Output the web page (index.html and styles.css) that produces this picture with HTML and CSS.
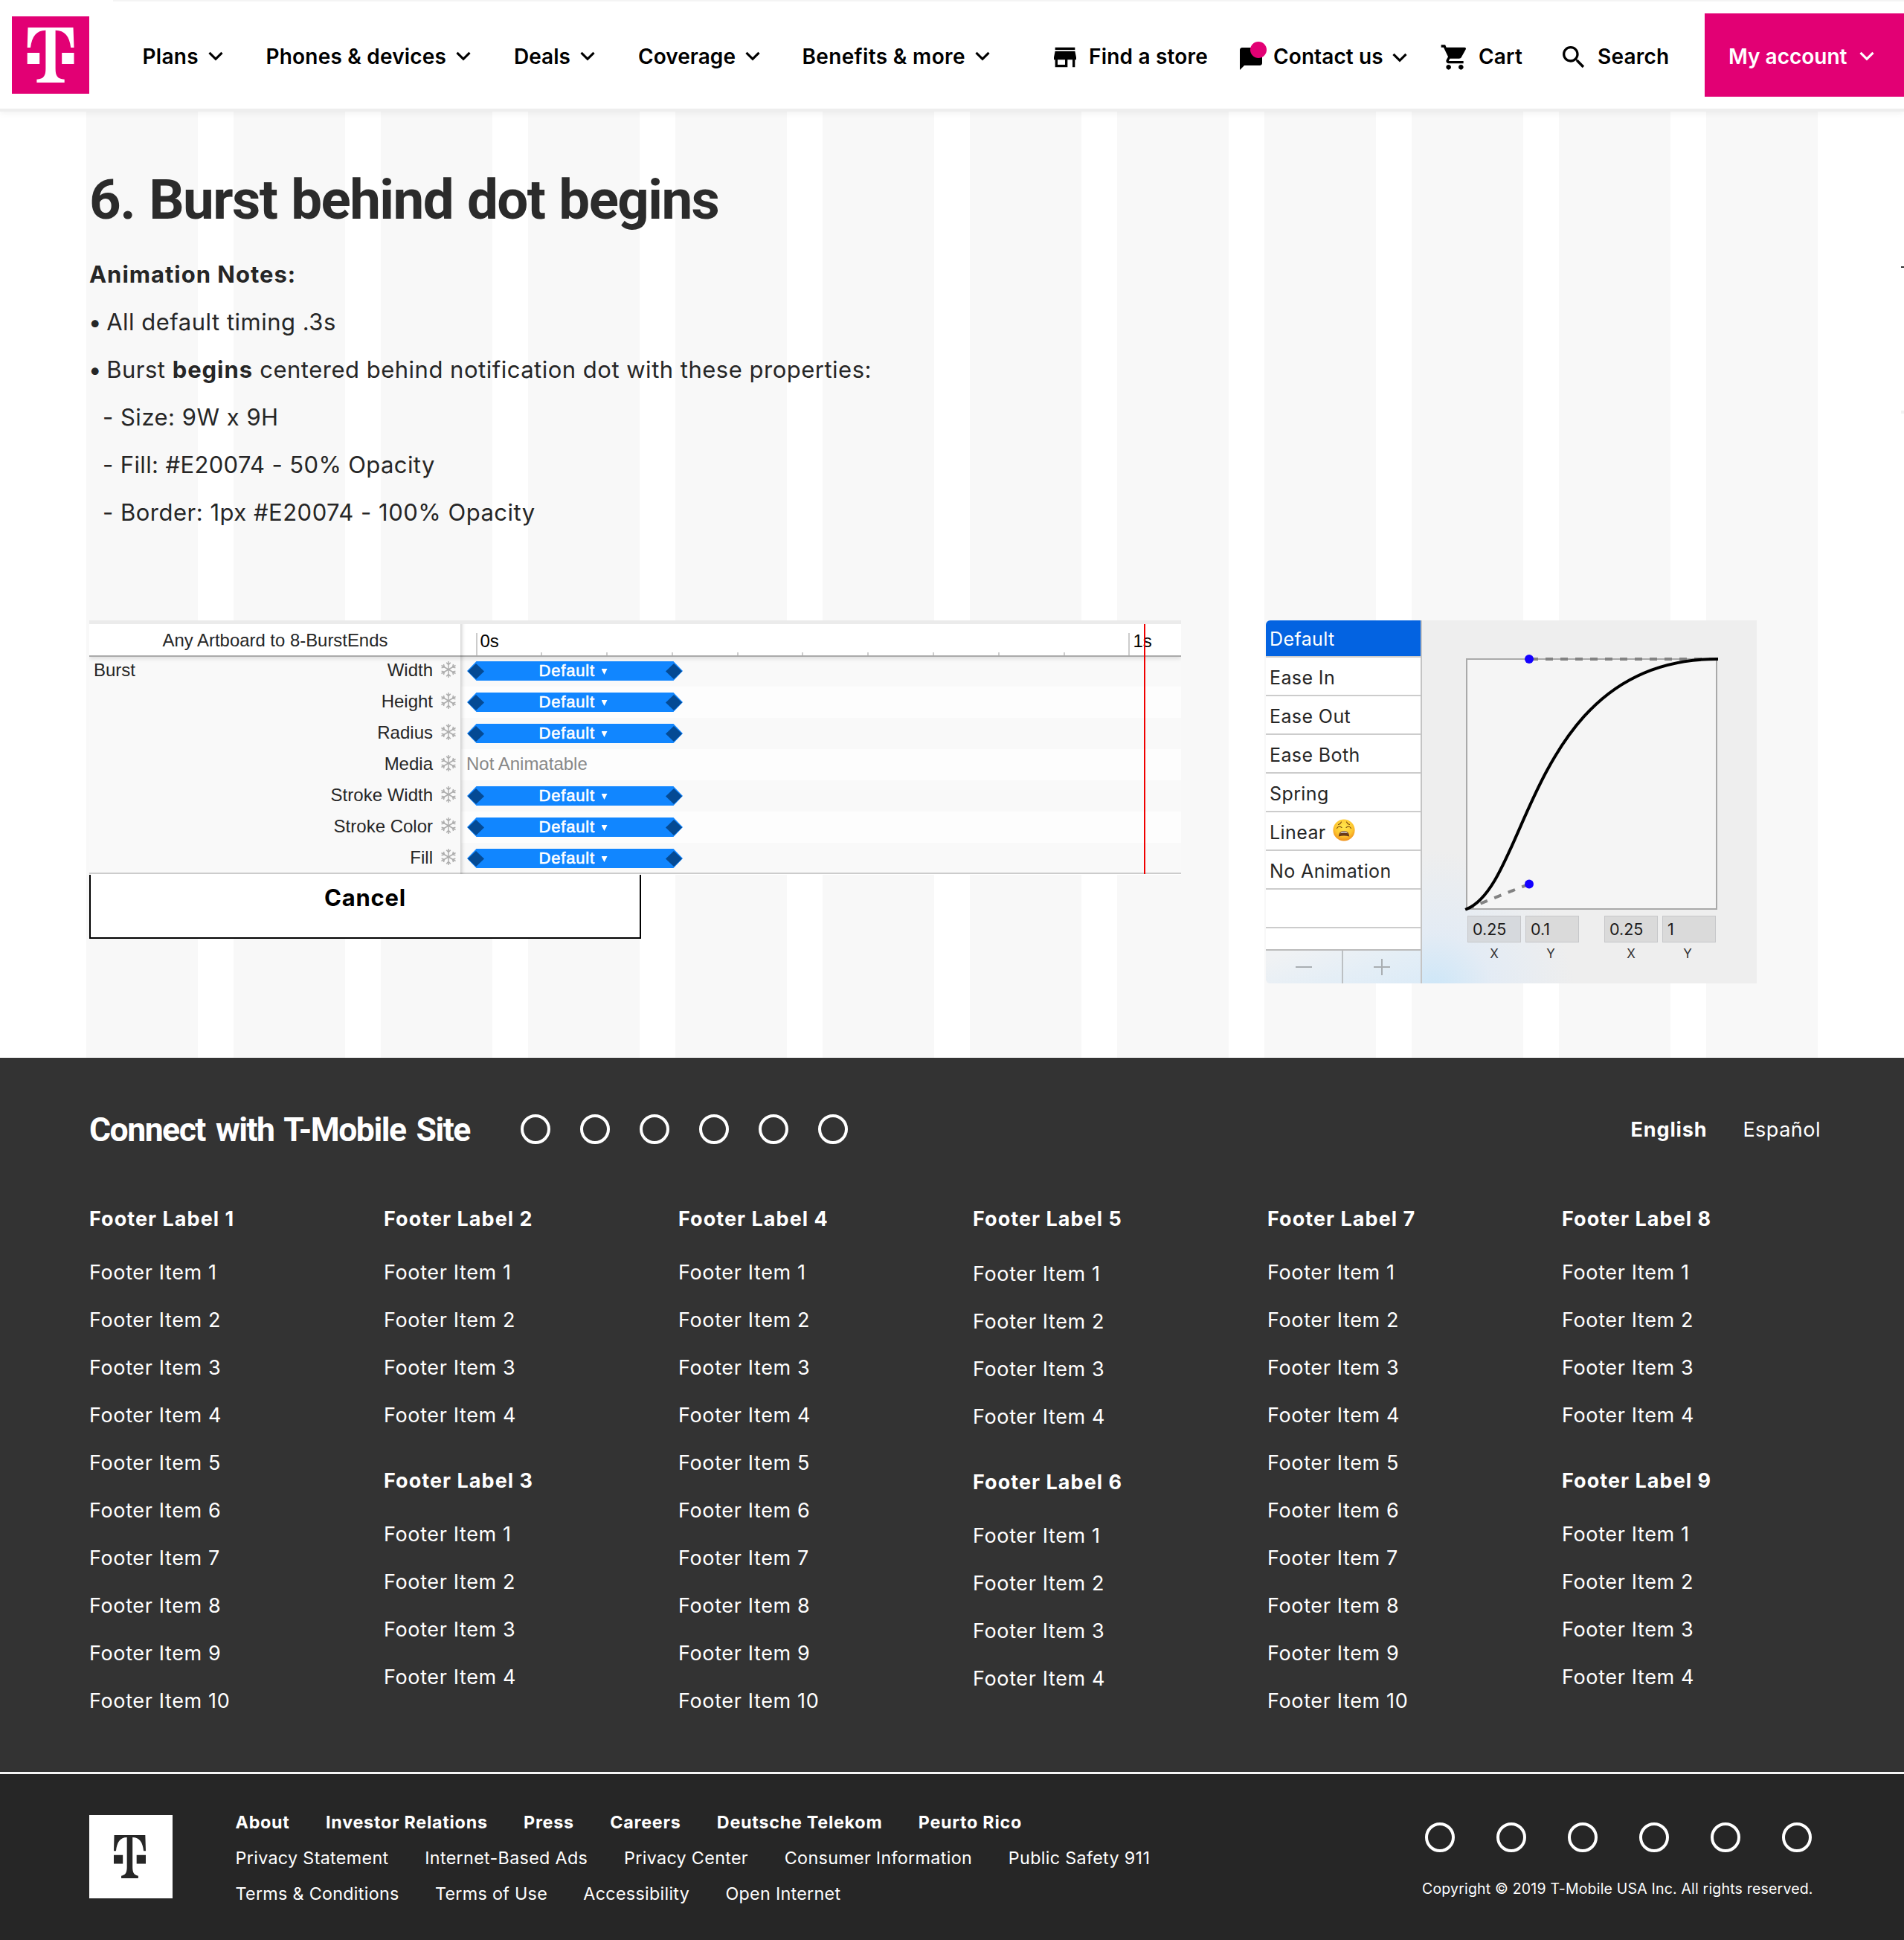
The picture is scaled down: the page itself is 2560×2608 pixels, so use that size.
FILE: index.html
```html
<!DOCTYPE html>
<html lang="en">
<head>
<meta charset="utf-8">
<title>Burst behind dot begins</title>
<link rel="stylesheet" href="styles.css">
</head>
<body>
<svg class="defs" width="0" height="0" aria-hidden="true">
  <symbol id="tee" viewBox="0 0 104 104"><path d="M21.5 15H82.5L83.5 42H79.2C77.5 27 71 18.7 58.6 18.7V70C58.6 80 61 84 70.7 84.7V89H33.4V84.7C43 84 45.4 80 45.4 70V18.7C33 18.7 27 27 25 42H20.7ZM20.7 49H37.2V64H20.7ZM67.2 49H83.5V64H67.2Z"/></symbol>
  <symbol id="chev" viewBox="0 0 20 13"><path d="M1.5 1.8L10 10.3L18.5 1.8" fill="none" stroke="currentColor" stroke-width="3.2"/></symbol>
  <symbol id="flake" viewBox="0 0 22 22"><g fill="none" stroke="#adadad" stroke-width="1.5">
    <g id="arm"><path d="M11 11V0M8.2 1.8L11 4.600L13.8 1.8"/></g>
    <use href="#arm" transform="rotate(60 11 11)"/><use href="#arm" transform="rotate(120 11 11)"/><use href="#arm" transform="rotate(180 11 11)"/><use href="#arm" transform="rotate(240 11 11)"/><use href="#arm" transform="rotate(300 11 11)"/></g></symbol>
  <symbol id="key" viewBox="0 0 22 21"><path d="M11 0L22 10.5L11 21L0 10.5Z" fill="#044a94"/></symbol>
</svg>

<header class="header">
  <svg class="logo"><use href="#tee"/></svg>
  <nav class="nav">
    <a>Plans <svg class="chev"><use href="#chev"/></svg></a>
    <a>Phones &amp; devices <svg class="chev"><use href="#chev"/></svg></a>
    <a>Deals <svg class="chev"><use href="#chev"/></svg></a>
    <a>Coverage <svg class="chev"><use href="#chev"/></svg></a>
    <a>Benefits &amp; more <svg class="chev"><use href="#chev"/></svg></a>
  </nav>
  <div class="utils">
    <a><svg class="ico" viewBox="0 0 24 24"><path d="M20 4H4v2h16V4zm1 10v-2l-1-5H4l-1 5v2h1v6h10v-6h4v6h2v-6h1zm-9 4H6v-4h6v4z"/></svg>Find a store</a>
    <a class="contact"><span class="chat"><svg viewBox="0 0 24 24"><path d="M20 2H4c-1.1 0-1.99.9-1.99 2L2 22l4-4h14c1.1 0 2-.9 2-2V4c0-1.1-.9-2-2-2z"/></svg><i class="dot"></i></span>Contact us <svg class="chev low"><use href="#chev"/></svg></a>
    <a><svg class="ico" viewBox="0 0 24 24"><path d="M7 18c-1.1 0-1.99.9-1.99 2S5.9 22 7 22s2-.9 2-2-.9-2-2-2zM1 2v2h2l3.6 7.59-1.35 2.45c-.16.28-.25.61-.25.96 0 1.1.9 2 2 2h12v-2H7.42c-.14 0-.25-.11-.25-.25l.03-.12.9-1.63h7.45c.75 0 1.41-.41 1.75-1.03l3.58-6.49c.08-.14.12-.31.12-.48 0-.55-.45-1-1-1H5.21l-.94-2H1zm16 16c-1.1 0-1.99.9-1.99 2s.89 2 1.99 2 2-.9 2-2-.9-2-2-2z"/></svg>Cart</a>
    <a><svg class="ico" viewBox="0 0 24 24"><path d="M15.5 14h-.79l-.28-.27C15.41 12.59 16 11.11 16 9.5 16 5.91 13.09 3 9.5 3S3 5.91 3 9.5 5.91 16 9.5 16c1.61 0 3.09-.59 4.23-1.57l.27.28v.79l5 4.99L20.49 19l-4.99-5zm-6 0C7.01 14 5 11.99 5 9.5S7.01 5 9.5 5 14 7.01 14 9.5 11.99 14 9.5 14z"/></svg>Search</a>
  </div>
  <a class="account">My account <svg class="chev"><use href="#chev"/></svg></a>
</header>

<main class="main">
  <i class="edge-mark"></i><i class="edge-mark faint"></i>
  <h1 class="title">6. Burst behind dot begins</h1>
  <div class="notes">
    <p class="lead">Animation Notes:</p>
    <p><span class="bullet">•</span> All default timing .3s</p>
    <p><span class="bullet">•</span> Burst <b>begins</b> centered behind notification dot with these properties:</p>
    <p class="sub">- Size: 9W x 9H</p>
    <p class="sub tight">- Fill: #E20074 - 50% Opacity</p>
    <p class="sub">- Border: 1px #E20074 - 100% Opacity</p>
  </div>

  <div class="panels">
    <div class="left">
      <section class="timeline">
        <div class="tl-head">
          <div class="tl-name">Any Artboard to 8-BurstEnds</div>
          <div class="ruler"><i class="major">0s</i><i></i><i></i><i></i><i></i><i></i><i></i><i></i><i></i><i></i><i class="major">1s</i></div>
        </div>
        <div class="tl-body">
          <div class="props">
            <div class="prop"><span class="layer">Burst</span>Width<svg class="flake"><use href="#flake"/></svg></div>
            <div class="prop">Height<svg class="flake"><use href="#flake"/></svg></div>
            <div class="prop">Radius<svg class="flake"><use href="#flake"/></svg></div>
            <div class="prop">Media<svg class="flake"><use href="#flake"/></svg></div>
            <div class="prop">Stroke Width<svg class="flake"><use href="#flake"/></svg></div>
            <div class="prop">Stroke Color<svg class="flake"><use href="#flake"/></svg></div>
            <div class="prop">Fill<svg class="flake"><use href="#flake"/></svg></div>
          </div>
          <div class="tracks">
            <div class="track"><div class="bar"><svg class="key"><use href="#key"/></svg><span class="ease">Default</span><i class="tri"></i><svg class="key"><use href="#key"/></svg></div></div>
            <div class="track"><div class="bar"><svg class="key"><use href="#key"/></svg><span class="ease">Default</span><i class="tri"></i><svg class="key"><use href="#key"/></svg></div></div>
            <div class="track"><div class="bar"><svg class="key"><use href="#key"/></svg><span class="ease">Default</span><i class="tri"></i><svg class="key"><use href="#key"/></svg></div></div>
            <div class="track none">Not Animatable</div>
            <div class="track"><div class="bar"><svg class="key"><use href="#key"/></svg><span class="ease">Default</span><i class="tri"></i><svg class="key"><use href="#key"/></svg></div></div>
            <div class="track"><div class="bar"><svg class="key"><use href="#key"/></svg><span class="ease">Default</span><i class="tri"></i><svg class="key"><use href="#key"/></svg></div></div>
            <div class="track"><div class="bar"><svg class="key"><use href="#key"/></svg><span class="ease">Default</span><i class="tri"></i><svg class="key"><use href="#key"/></svg></div></div>
          </div>
        </div>
        <i class="divider"></i><i class="playhead"></i>
      </section>
      <div class="cancel">Cancel</div>
    </div>

    <section class="curve">
      <div class="presets">
        <div class="preset on">Default</div>
        <div class="preset">Ease In</div>
        <div class="preset">Ease Out</div>
        <div class="preset">Ease Both</div>
        <div class="preset">Spring</div>
        <div class="preset">Linear
          <svg class="emoji" viewBox="0 0 30 30"><defs><radialGradient id="face" cx=".5" cy=".35" r=".65"><stop offset="0" stop-color="#ffe84e"/><stop offset=".65" stop-color="#fdc52f"/><stop offset="1" stop-color="#ef8f1c"/></radialGradient></defs><circle cx="15" cy="15" r="14.6" fill="url(#face)"/><g fill="none" stroke="#7a4a10" stroke-width="1.1" stroke-linecap="round"><path d="M7.500 7.500Q10.500 6.500 11.500 4M22.500 7.500Q19.500 6.500 18.500 4"/><path d="M5.500 12.500Q8 8.500 12 11.500M24.500 12.500Q22 8.500 18 11.500"/></g><path d="M7.800 23.500Q8 16 15 16T22.200 23.500Q15 21.500 7.800 23.500Z" fill="#6b3a17"/><path d="M9.800 19.200Q11.500 16.800 15 16.800T20.200 19.200Q15 18 9.800 19.200Z" fill="#d8d8dc"/></svg></div>
        <div class="preset">No Animation</div>
        <div class="preset"></div>
        <div class="tail"></div>
        <div class="tools">
          <span><svg width="24" height="24"><path d="M1 12H23" stroke="#a9aeb2" stroke-width="2"/></svg></span>
          <span><svg width="24" height="24"><path d="M1 12H23M12 1V23" stroke="#a9aeb2" stroke-width="2"/></svg></span>
        </div>
      </div>
      <div class="editor">
        <svg class="graph" viewBox="0 0 360 354">
          <rect x="12" y="12" width="336" height="336" fill="#f5f5f5" stroke="#a9a9a9" stroke-width="2"/>
          <path d="M348 12H96M12 348L96 314.400" fill="none" stroke="#828282" stroke-width="4" stroke-dasharray="10 10"/>
          <path d="M12 348C96 314.400 96 12 348 12" fill="none" stroke="#000" stroke-width="4" stroke-linecap="square"/>
          <circle cx="96" cy="12" r="6" fill="#1400ff"/><circle cx="96" cy="314.400" r="6" fill="#1400ff"/>
        </svg>
        <div class="fields">
          <label><span>0.25</span>X</label><label class="y"><span>0.1</span>Y</label>
          <label class="second"><span>0.25</span>X</label><label class="y"><span>1</span>Y</label>
        </div>
      </div>
    </section>
  </div>
</main>

<footer class="footer">
  <div class="connect">
    <h2>Connect with T-Mobile Site</h2>
    <div class="rings"><i></i><i></i><i></i><i></i><i></i><i></i></div>
    <div class="langs"><b>English</b><span>Español</span></div>
  </div>
  <div class="cols">
    <ul><li class="label">Footer Label 1</li><li>Footer Item 1</li><li>Footer Item 2</li><li>Footer Item 3</li><li>Footer Item 4</li><li>Footer Item 5</li><li>Footer Item 6</li><li>Footer Item 7</li><li>Footer Item 8</li><li>Footer Item 9</li><li>Footer Item 10</li></ul>
    <ul><li class="label">Footer Label 2</li><li>Footer Item 1</li><li>Footer Item 2</li><li>Footer Item 3</li><li>Footer Item 4</li><li class="label">Footer Label 3</li><li>Footer Item 1</li><li>Footer Item 2</li><li>Footer Item 3</li><li>Footer Item 4</li></ul>
    <ul><li class="label">Footer Label 4</li><li>Footer Item 1</li><li>Footer Item 2</li><li>Footer Item 3</li><li>Footer Item 4</li><li>Footer Item 5</li><li>Footer Item 6</li><li>Footer Item 7</li><li>Footer Item 8</li><li>Footer Item 9</li><li>Footer Item 10</li></ul>
    <ul class="loose"><li class="label">Footer Label 5</li><li>Footer Item 1</li><li>Footer Item 2</li><li>Footer Item 3</li><li>Footer Item 4</li><li class="label">Footer Label 6</li><li>Footer Item 1</li><li>Footer Item 2</li><li>Footer Item 3</li><li>Footer Item 4</li></ul>
    <ul><li class="label">Footer Label 7</li><li>Footer Item 1</li><li>Footer Item 2</li><li>Footer Item 3</li><li>Footer Item 4</li><li>Footer Item 5</li><li>Footer Item 6</li><li>Footer Item 7</li><li>Footer Item 8</li><li>Footer Item 9</li><li>Footer Item 10</li></ul>
    <ul><li class="label">Footer Label 8</li><li>Footer Item 1</li><li>Footer Item 2</li><li>Footer Item 3</li><li>Footer Item 4</li><li class="label">Footer Label 9</li><li>Footer Item 1</li><li>Footer Item 2</li><li>Footer Item 3</li><li>Footer Item 4</li></ul>
  </div>
</footer>

<div class="legal">
  <div class="badge"><svg viewBox="20.700 15 62.800 74" preserveAspectRatio="none"><path fill="#262626" d="M21.5 15H82.5L83.5 42H79.2C77.5 27 71 18.7 57.500 18.7V70C57.500 80 61 84 68.700 84.7V89H35.400V84.7C43 84 46.500 80 46.500 70V18.7C33 18.7 27 27 25 42H20.7ZM20.7 49H38.500V64H20.7ZM65.500 49H83.5V64H65.500Z"/></svg></div>
  <div class="links">
    <div class="line strong"><span>About</span><span>Investor Relations</span><span>Press</span><span>Careers</span><span>Deutsche Telekom</span><span>Peurto Rico</span></div>
    <div class="line"><span>Privacy Statement</span><span>Internet-Based Ads</span><span>Privacy Center</span><span>Consumer Information</span><span>Public Safety 911</span></div>
    <div class="line last"><span>Terms &amp; Conditions</span><span>Terms of Use</span><span>Accessibility</span><span>Open Internet</span></div>
  </div>
  <div class="right">
    <div class="rings wide"><i></i><i></i><i></i><i></i><i></i><i></i></div>
    <div class="copy">Copyright © 2019 T-Mobile USA Inc. All rights reserved.</div>
  </div>
</div>
</body>
</html>
```
FILE: styles.css
```css
* { box-sizing: border-box; }
body { margin: 0; width: 2560px; background: #fff; color: #262626; font-family: Inter, "Liberation Sans", sans-serif; overflow-x: hidden; }
h1, h2, p, ul { margin: 0; padding: 0; }
i { font-style: normal; }
.defs { position: absolute; }

/* header */
.header { position: relative; z-index: 2; height: 146px; display: flex; align-items: flex-start; background: linear-gradient(#f4f4f4, #f4f4f4) 152px 0 / 2408px 2px no-repeat, #fff; box-shadow: 0 4px 0 #eee, 0 6px 8px rgba(0, 0, 0, .06); color: #000; font-size: 28px; font-weight: 600; line-height: 38px; letter-spacing: .2px; white-space: nowrap; }
.header a { display: flex; align-items: center; }
.logo { width: 104px; height: 104px; margin: 22px 71.500px 0 16px; background: #e20074; fill: #fff; flex: none; }
.nav { display: grid; grid-template-columns: 166px 333.500px 167px 220.500px 333.500px; margin-top: 57px; }
.nav a:first-child { letter-spacing: .3px; }
.nav a:nth-child(3) { letter-spacing: 0; }
.nav a:nth-child(4) { letter-spacing: .05px; }
.nav a:nth-child(5) { letter-spacing: .35px; }
.chev { width: 20px; height: 13px; margin-left: 13px; position: relative; top: -1px; flex: none; }
.chev.low { top: 1px; width: 22px; margin-left: 11px; }
.utils { display: grid; grid-template-columns: 252px 272px 160px 196px; margin-top: 57px; height: 38px; }
.utils a { height: 38px; }
.ico { width: 40px; height: 40px; margin-right: 12px; position: relative; top: 1px; flex: none; }
.chat { position: relative; width: 36px; height: 36px; margin-right: 12px; top: 3px; }
.contact { letter-spacing: .1px; }
.dot { position: absolute; left: 17px; top: -5px; width: 22px; height: 22px; border-radius: 50%; background: #e20074; }
.header .account { width: 268px; height: 112px; margin-top: 18px; padding: 4px 0 0 32px; background: #e20074; color: #fff; letter-spacing: 0; }
.account .chev { margin-left: 16px; }

/* main */
.main { position: relative; height: 1276px; padding: 83px 0 0 120px; background: repeating-linear-gradient(to right, #f8f8f8 0 150px, #fff 150px 198px) 116px 0 / 2328px 100% no-repeat, #fff; }
.edge-mark { position: absolute; right: 0; top: 212px; width: 4px; height: 2px; background: #333; }
.edge-mark.faint { top: 406px; height: 4px; background: #f2f2f2; }
.title { font: 700 74.500px/80px Roboto, sans-serif; letter-spacing: -1.580px; word-spacing: 2px; color: #2b2b2b; }
.notes { margin-top: 28px; font-size: 31px; line-height: 64px; letter-spacing: .5px; }
.lead { font-weight: 700; letter-spacing: .980px; }
.bullet { margin: 0 -3px 0 -1px; }
.notes b { font-weight: 700; letter-spacing: .950px; }
.sub { padding-left: 18px; }
.sub.tight { letter-spacing: .370px; }
.panels { display: flex; margin-top: 113px; gap: 114px; }
.left { width: 1468px; }

/* timeline */
.timeline { position: relative; height: 342px; border-top: 5px solid #ebebeb; border-bottom: 1px solid #fff; font-family: "Liberation Sans", Arial, sans-serif; font-size: 24px; background: #f9f9f9; overflow: hidden; }
.tl-head { position: relative; z-index: 1; display: flex; height: 42px; background: #fff; box-shadow: 0 2px 0 #aaa, 0 4px 6px rgba(0, 0, 0, .13); }
.tl-name { width: 500px; text-align: center; font-size: 23.900px; line-height: 43px; }
.ruler { display: flex; width: 968px; padding-left: 19.500px; overflow: hidden; align-items: flex-end; color: #000; font-size: 24px; }
.ruler i { flex: none; width: 87.800px; height: 4px; border-left: 2px solid #ccc; }
.ruler .major { display: flex; align-items: flex-start; height: 30px; padding: 1px 0 0 4px; line-height: 19px; overflow: visible; }
.tl-body { display: flex; height: 294px; box-shadow: inset 0 -2px #ccc; }
.props { width: 500px; }
.prop { display: flex; justify-content: flex-end; align-items: center; height: 42px; padding: 0 6px 2px; }
.layer { margin-right: auto; }
.flake { width: 22px; height: 22px; margin: 0 0 2px 10px; }
.tracks { width: 968px; }
.track { display: flex; align-items: center; height: 42px; padding-left: 8px; }
.track:nth-child(even) { background: #fdfdfd; }
.track:last-child { box-shadow: inset 0 -2px #ccc; }
.track.none { color: #888; padding-bottom: 2px; padding-left: 7px; }
.bar { display: flex; align-items: center; width: 290px; height: 26px; padding: 0 1px; background: #1186ff; clip-path: polygon(0 50%, 12.500px 0, 277.500px 0, 100% 50%, 277.500px 100%, 12.500px 100%); color: #fff; }
.key { width: 22px; height: 21px; flex: none; }
.ease { width: 75px; margin-left: 73.500px; font-size: 22px; line-height: 24px; letter-spacing: .800px; -webkit-text-stroke: .6px #fff; padding-bottom: 1px; white-space: nowrap; }
.tri { width: 8px; height: 8px; margin: 2px auto 0 9px; background: #fff; clip-path: polygon(0 0, 100% 0, 50% 100%); }
.divider { position: absolute; z-index: 2; left: 499px; top: 0; width: 7px; height: 100%; background: linear-gradient(to right, rgba(0,0,0,.16), rgba(0,0,0,.03) 60%, transparent); }
.playhead { position: absolute; z-index: 3; left: 1418px; top: 0; width: 2px; height: 340px; background: #f00000; }
.cancel { width: 742px; height: 86px; border: solid #000; border-width: 0 2px 2px; background: #fff; color: #000; font-size: 31px; font-weight: 700; letter-spacing: .800px; line-height: 61px; text-align: center; }

/* curve editor */
.curve { display: flex; width: 660px; height: 488px; border-radius: 6px 0 0 6px; overflow: hidden; background: radial-gradient(circle at 225px 500px, #cbe6f8 0, rgba(225, 235, 246, .8) 80px, rgba(238, 238, 240, 0) 190px), #eee; }
.presets { width: 210px; border-right: 2px solid #c4c4c4; font-size: 25px; letter-spacing: .400px; }
.preset { display: flex; align-items: center; height: 52px; padding: 3px 0 0 5px; border-bottom: 2px solid #ccc; background: #fff; }
.preset.on { height: 50px; padding-top: 2px; background: #0363e1; color: #fff; }
.emoji { width: 30px; height: 30px; margin: -6px 0 0 9px; }
.tail { height: 30px; background: #fff; border-bottom: 2px solid #bbb; }
.tools { display: flex; height: 44px; background: linear-gradient(160deg, #f0f2f4 10%, #e4eef6 60%, #dcebf7); }
.tools span { display: flex; align-items: center; justify-content: center; width: 104px; }
.tools span:first-child { border-right: 2px solid #bcc0c3; }
.editor { padding: 40px 0 0 48px; }
.graph { display: block; width: 360px; height: 354px; }
.fields { display: flex; gap: 6px; margin: 3px 0 0 13px; }
.fields label { display: block; width: 72px; font-size: 17px; line-height: 20px; text-align: center; color: #333; }
.fields label.second { margin-left: 28px; }
.fields span { display: block; height: 36px; margin-bottom: 5px; padding-left: 6px; border: 1px solid #c6c7c9; background: #dadada; color: #1c1c1c; font-size: 21.500px; line-height: 35px; text-align: left; }
.fields label.y { padding-right: 4px; }
.fields .y span { margin-right: -4px; }
.fields label:first-child span { background: #d6d9dd; }

/* footer */
.footer { height: 960px; padding: 76px 0 0 120px; background: #333; color: #fff; font-size: 27px; }
.connect { display: flex; align-items: center; height: 40px; }
.connect h2 { width: 580px; font: 700 44.500px/44px Roboto, sans-serif; letter-spacing: -1.500px; word-spacing: 4.500px; white-space: nowrap; padding-top: 2px; }
.rings { display: flex; gap: 40px; }
.rings i { width: 40px; height: 40px; border: 4px solid #fff; border-radius: 50%; }
.langs { display: flex; gap: 48px; margin: 0 112px 0 auto; letter-spacing: .5px; }
.langs b { font-weight: 700; letter-spacing: .850px; }
.cols { display: grid; grid-template-columns: repeat(6, 396px); margin-top: 69px; line-height: 64px; letter-spacing: .630px; }
.cols ul { list-style: none; }
.cols .label { margin-bottom: 8px; font-weight: 700; letter-spacing: 1.040px; }
.cols li + .label { margin-top: 24px; }
.cols .loose .label:first-child { margin-bottom: 10px; }

/* legal bar */
.legal { display: flex; height: 226px; border-top: 3px solid #f5f5f5; padding-left: 120px; background: #262626; color: #fff; font-size: 23.300px; }
.badge { display: flex; align-items: center; justify-content: center; width: 112px; height: 112px; margin-top: 55px; background: #fff; padding-right: 4px; }
.badge svg { width: 43px; height: 58px; }
.links { margin: 40.500px 0 0 84.500px; line-height: 48px; letter-spacing: .330px; white-space: nowrap; }
.line { display: flex; gap: 48.800px; }
.line.last { gap: 48.300px; letter-spacing: .300px; }
.strong { gap: 48.400px; font-weight: 700; letter-spacing: .750px; }
.right { width: 536px; margin: 65px 112px 0 auto; }
.rings.wide { gap: 56px; padding-left: 4px; }
.copy { margin-top: 34px; font-size: 19.500px; line-height: 30px; letter-spacing: .190px; white-space: nowrap; }
```
